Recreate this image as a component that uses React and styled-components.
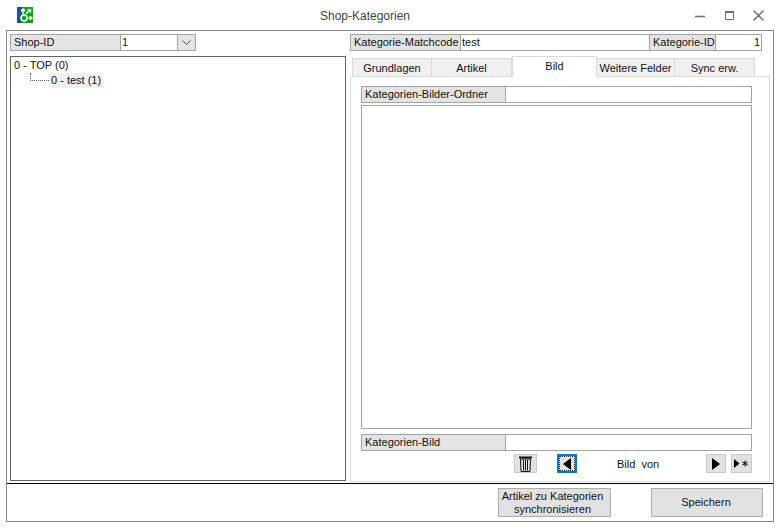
import React from 'react';
import styled, { createGlobalStyle } from 'styled-components';

const GlobalStyle = createGlobalStyle`
  html, body { margin: 0; padding: 0; background: #fff; }
  body { font-family: "Liberation Sans", Arial, sans-serif; font-size: 11px; color: #111; }
`;

const Page = styled.div`
  width: 782px;
  height: 528px;
  overflow: hidden;
`;

const TitleBar = styled.div`
  height: 30px;
  display: flex;
  align-items: center;
  padding: 0 18px 0 17px;
`;

const AppIcon = styled.svg`
  width: 16px;
  height: 16px;
  margin-top: -1px;
`;

const Title = styled.div`
  flex: 1;
  text-align: center;
  color: #444;
  font-size: 12px;
  margin-top: 2px;
  padding-left: 2px;
`;

const WinControls = styled.div`
  display: flex;
  align-items: center;
  gap: 18px;
  svg { display: block; width: 11px; height: 11px; }
`;

const Frame = styled.div`
  margin-left: 6px;
  width: 768px;
  height: 492px;
  box-sizing: border-box;
  border: 1px solid #868686;
  display: flex;
  flex-direction: column;
`;

const Body = styled.div`
  height: 452px;
  padding: 3px 0 0 3px;
  box-sizing: border-box;
  display: flex;
  gap: 4px;
`;

const LeftCol = styled.div`
  width: 336px;
  display: flex;
  flex-direction: column;
  gap: 5px;
`;

const RightCol = styled.div`
  width: 420px;
  display: flex;
  flex-direction: column;
`;

const FieldRow = styled.div`
  box-sizing: border-box;
  height: 17px;
  width: ${p => p.$width || '100%'};
  border: 1px solid #a3a3a3;
  display: flex;
  flex: none;
  background: #fff;
  line-height: 15px;
`;

const FieldLabel = styled.div`
  width: ${p => p.$width}px;
  flex: none;
  box-sizing: border-box;
  background: #e4e4e4;
  border-right: 1px solid #a3a3a3;
  border-left: ${p => (p.$divided ? '1px solid #a3a3a3' : 'none')};
  padding-left: 3px;
  white-space: nowrap;
`;

const FieldValue = styled.div`
  flex: ${p => (p.$width ? 'none' : '1')};
  width: ${p => (p.$width ? `${p.$width}px` : 'auto')};
  box-sizing: border-box;
  padding: 0 1px;
  text-align: ${p => (p.$right ? 'right' : 'left')};
  min-width: 0;
`;

const ComboButton = styled.div`
  width: 18px;
  flex: none;
  box-sizing: border-box;
  background: #e4e4e4;
  border-left: 1px solid #a3a3a3;
  display: flex;
  align-items: center;
  justify-content: center;
`;

const TreeBox = styled.div`
  box-sizing: border-box;
  height: 425px;
  border: 1px solid #646464;
  padding: 1px 3px;
  line-height: 15px;
`;

const TreeChild = styled.div`
  display: flex;
  align-items: flex-start;
  margin-left: 16px;
`;

const TreeLine = styled.span`
  width: 19px;
  height: 8px;
  box-sizing: border-box;
  border-left: 1px dotted #555;
  border-bottom: 1px dotted #555;
`;

const TreeSelected = styled.span`
  background: #f0f0f0;
  padding: 0 2px;
`;

const Tabs = styled.div`
  display: flex;
  align-items: flex-end;
  height: 21px;
  margin: 5px 0 -1px 2px;
  position: relative;
  z-index: 1;
`;

const Tab = styled.div`
  box-sizing: border-box;
  width: ${p => p.$width}px;
  height: ${p => (p.$active ? '21px' : '19px')};
  background: ${p => (p.$active ? '#fff' : '#f0f0f0')};
  border: 1px solid #dadada;
  border-bottom: ${p => (p.$active ? 'none' : '1px solid #dadada')};
  border-left-width: ${p => (p.$first || p.$active ? '1px' : '0')};
  text-align: center;
  line-height: 18px;
  white-space: nowrap;
`;

const TabPanel = styled.div`
  box-sizing: border-box;
  height: 406px;
  border: 1px solid #dadada;
  padding: 9px 17px 0 10px;
  display: flex;
  flex-direction: column;
`;

const PictureBox = styled.div`
  box-sizing: border-box;
  height: 324px;
  margin: 2px 0 5px;
  border: 1px solid #a3a3a3;
  flex: none;
`;

const PictureNav = styled.div`
  display: flex;
  align-items: center;
  height: 19px;
  margin-top: 3px;
  padding-left: 153px;
`;

const NavButton = styled.button`
  box-sizing: border-box;
  width: ${p => p.$width}px;
  height: 19px;
  margin: 0 0 0 ${p => p.$gap || 0}px;
  padding: 0;
  flex: none;
  background: #e1e1e1;
  border: 1px solid ${p => (p.$focus ? '#0078d7' : '#c9c9c9')};
  outline: ${p => (p.$focus ? '1px dotted #222' : 'none')};
  outline-offset: -3px;
  box-shadow: ${p => (p.$focus ? 'inset 0 0 0 1px #0078d7' : 'none')};
  display: flex;
  align-items: center;
  justify-content: center;
  svg { display: block; }
`;

const NavText = styled.div`
  width: 129px;
  padding-left: 40px;
  box-sizing: border-box;
  white-space: pre;
`;

const Footer = styled.div`
  border-top: 1px solid #000;
  flex: 1;
  display: flex;
  justify-content: flex-end;
  align-items: flex-start;
  gap: 40px;
  padding: 4px 10px 0 0;
`;

const ActionButton = styled.button`
  box-sizing: border-box;
  width: ${p => p.$width}px;
  height: 29px;
  padding: 0 ${p => p.$padRight || 0}px 0 0;
  background: #e1e1e1;
  border: 1px solid #adadad;
  font: inherit;
  line-height: 13px;
  color: #111;
`;

const Logo = () => (
  <AppIcon viewBox="0 0 16 16">
    <rect width="5" height="16" fill="#1d4fa5" />
    <rect x="5" width="11" height="16" fill="#08a80e" />
    <circle cx="7" cy="11" r="3" fill="none" stroke="#fff" strokeWidth="1.5" />
    <path d="M6 2v5M4 4l2-2 2 2" fill="none" stroke="#fff" strokeWidth="1.4" />
    <path d="M9 7l4-4M10.5 2.6H13.500V5.500" fill="none" stroke="#fff" strokeWidth="1.4" />
    <path d="M11.500 11h4M13.500 9v4" fill="none" stroke="#fff" strokeWidth="1.6" />
  </AppIcon>
);

const Trash = () => (
  <svg width="13" height="16" viewBox="0 0 13 16">
    <path d="M0 1.500h13" stroke="#111" strokeWidth="2" />
    <path d="M1.500 3h10l-.5 12.500H2z" fill="#e1e1e1" stroke="#111" />
    <path d="M4.500 4v10.500M6.500 4v10.500M8.500 4v10.500" stroke="#111" />
  </svg>
);

const ArrowLeft = () => (
  <svg width="8" height="12" viewBox="0 0 8 12"><path d="M8 0v12L0 6z" fill="#000" /></svg>
);

const ArrowRight = () => (
  <svg width="8" height="12" viewBox="0 0 8 12"><path d="M0 0v12l8-6z" fill="#000" /></svg>
);

const ArrowNew = () => (
  <svg width="15" height="9" viewBox="0 0 15 9">
    <path d="M0 0v9l5.500-4.500z" fill="#000" />
    <path d="M11 1.500v6M8.400 3l5.200 3M13.600 3l-5.200 3" stroke="#000" />
  </svg>
);

export default function App() {
  return (
    <Page>
      <GlobalStyle />
      <TitleBar>
        <Logo />
        <Title>Shop-Kategorien</Title>
        <WinControls>
          <svg viewBox="0 0 11 11"><path d="M0 6.500h10" stroke="#6e6e6e" strokeWidth="1.500" /></svg>
          <svg viewBox="0 0 11 11"><path d="M1.500 1.500h8v8h-8z" fill="none" stroke="#6e6e6e" /><path d="M1 2h9" stroke="#6e6e6e" strokeWidth="2" /></svg>
          <svg viewBox="0 0 11 11"><path d="M.5.500l10 10M10.500.500l-10 10" stroke="#6e6e6e" strokeWidth="1.500" /></svg>
        </WinControls>
      </TitleBar>
      <Frame>
        <Body>
          <LeftCol>
            <FieldRow $width="186px">
              <FieldLabel $width={110}>Shop-ID</FieldLabel>
              <FieldValue>1</FieldValue>
              <ComboButton>
                <svg width="9" height="5" viewBox="0 0 9 5"><path d="M.5.500l4 4 4-4" fill="none" stroke="#555" /></svg>
              </ComboButton>
            </FieldRow>
            <TreeBox>
              <div>0 - TOP (0)</div>
              <TreeChild>
                <TreeLine />
                <TreeSelected>0 - test (1)</TreeSelected>
              </TreeChild>
            </TreeBox>
          </LeftCol>
          <RightCol>
            <FieldRow $width="412px">
              <FieldLabel $width={110}>Kategorie-Matchcode</FieldLabel>
              <FieldValue>test</FieldValue>
              <FieldLabel $divided $width={67}>Kategorie-ID</FieldLabel>
              <FieldValue $right $width={45}>1</FieldValue>
            </FieldRow>
            <Tabs>
              <Tab $first $width={80}>Grundlagen</Tab>
              <Tab $width={80}>Artikel</Tab>
              <Tab $active $width={85}>Bild</Tab>
              <Tab $width={78}>Weitere Felder</Tab>
              <Tab $width={80}>Sync erw.</Tab>
            </Tabs>
            <TabPanel>
              <FieldRow>
                <FieldLabel $width={144}>Kategorien-Bilder-Ordner</FieldLabel>
                <FieldValue />
              </FieldRow>
              <PictureBox />
              <FieldRow>
                <FieldLabel $width={144}>Kategorien-Bild</FieldLabel>
                <FieldValue />
              </FieldRow>
              <PictureNav>
                <NavButton $width={23}><Trash /></NavButton>
                <NavButton $focus $width={20} $gap={20}><ArrowLeft /></NavButton>
                <NavText>{'Bild  von'}</NavText>
                <NavButton $width={20}><ArrowRight /></NavButton>
                <NavButton $width={21} $gap={5}><ArrowNew /></NavButton>
              </PictureNav>
            </TabPanel>
          </RightCol>
        </Body>
        <Footer>
          <ActionButton $width={113} $padRight={4}>Artikel zu Kategorien<br />synchronisieren</ActionButton>
          <ActionButton $width={112} $padRight={2}>Speichern</ActionButton>
        </Footer>
      </Frame>
    </Page>
  );
}
